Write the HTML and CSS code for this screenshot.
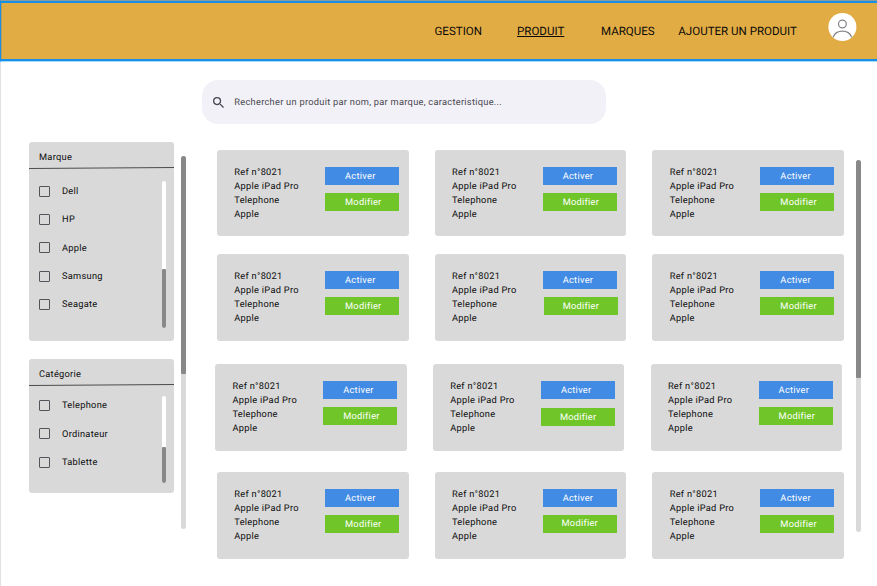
FILE: index.html
```html
<!DOCTYPE html>
<html lang="fr">
<head>
<meta charset="utf-8">
<title>Produits</title>
<link rel="stylesheet" href="styles.css">
</head>
<body>
<header class="header">
  <nav class="nav">
    <a>GESTION</a>
    <a class="current">PRODUIT</a>
    <a>MARQUES</a>
    <a>AJOUTER UN PRODUIT</a>
    <svg class="avatar" viewBox="0 0 29 28"><g transform="translate(.4 0)"><circle cx="14" cy="14" r="14" fill="#fff"/><g fill="none" stroke="#85868a" stroke-width="1.25"><circle cx="14" cy="11" r="3.9"/><path d="M4.7 24.2C6.2 20.4 9.8 18.2 14 18.2S21.8 20.4 23.3 24.2"/></g></g></svg>
  </nav>
</header>
<main class="page">
  <div class="search">
    <svg class="search-icon" viewBox="3 3 17.5 17.5"><path fill="#49454f" d="M15.5 14h-.79l-.28-.27A6.47 6.47 0 0 0 16 9.5 6.5 6.5 0 1 0 9.5 16c1.61 0 3.09-.59 4.23-1.57l.27.28v.79l5 4.99L20.49 19l-4.99-5zm-6 0C7.01 14 5 11.99 5 9.5S7.01 5 9.5 5 14 7.01 14 9.5 11.99 14 9.5 14z"/></svg>
    <span>Rechercher un produit par nom, par marque, caracteristique...</span>
  </div>
  <div class="content">
    <aside class="filters">
      <section class="panel brands">
        <h2>Marque</h2>
        <svg class="rule" viewBox="0 0 145 2"><path d="M0 1.5L145 .5" stroke="#3c3c3e" stroke-width=".9"/></svg>
        <div class="panel-body">
          <ul>
            <li><i class="box"></i><span>Dell</span></li>
            <li><i class="box"></i><span>HP</span></li>
            <li><i class="box"></i><span>Apple</span></li>
            <li><i class="box"></i><span>Samsung</span></li>
            <li><i class="box"></i><span>Seagate</span></li>
          </ul>
          <div class="mini-scroll"><div class="mini-thumb"></div></div>
        </div>
      </section>
      <section class="panel categories">
        <h2>Catégorie</h2>
        <svg class="rule" viewBox="0 0 145 2"><path d="M0 1.5L145 .5" stroke="#3c3c3e" stroke-width=".9"/></svg>
        <div class="panel-body">
          <ul>
            <li><i class="box"></i><span>Telephone</span></li>
            <li><i class="box"></i><span>Ordinateur</span></li>
            <li><i class="box"></i><span>Tablette</span></li>
          </ul>
          <div class="mini-scroll"><div class="mini-thumb"></div></div>
        </div>
      </section>
    </aside>
    <div class="scroll scroll-filters"><div class="thumb"></div></div>
    <div class="products">
      <div class="row">
        <article class="card"><p>Ref n°8021<br>Apple iPad Pro<br>Telephone<br>Apple</p><div class="actions"><button class="on">Activer</button><button class="edit">Modifier</button></div></article>
        <article class="card"><p>Ref n°8021<br>Apple iPad Pro<br>Telephone<br>Apple</p><div class="actions"><button class="on">Activer</button><button class="edit">Modifier</button></div></article>
        <article class="card"><p>Ref n°8021<br>Apple iPad Pro<br>Telephone<br>Apple</p><div class="actions"><button class="on">Activer</button><button class="edit">Modifier</button></div></article>
      </div>
      <div class="row second">
        <article class="card"><p>Ref n°8021<br>Apple iPad Pro<br>Telephone<br>Apple</p><div class="actions"><button class="on">Activer</button><button class="edit">Modifier</button></div></article>
        <article class="card"><p>Ref n°8021<br>Apple iPad Pro<br>Telephone<br>Apple</p><div class="actions"><button class="on">Activer</button><button class="edit shifted">Modifier</button></div></article>
        <article class="card"><p>Ref n°8021<br>Apple iPad Pro<br>Telephone<br>Apple</p><div class="actions"><button class="on">Activer</button><button class="edit">Modifier</button></div></article>
      </div>
      <div class="row third">
        <article class="card"><p>Ref n°8021<br>Apple iPad Pro<br>Telephone<br>Apple</p><div class="actions"><button class="on">Activer</button><button class="edit">Modifier</button></div></article>
        <article class="card"><p>Ref n°8021<br>Apple iPad Pro<br>Telephone<br>Apple</p><div class="actions"><button class="on">Activer</button><button class="edit lowered">Modifier</button></div></article>
        <article class="card"><p>Ref n°8021<br>Apple iPad Pro<br>Telephone<br>Apple</p><div class="actions"><button class="on">Activer</button><button class="edit">Modifier</button></div></article>
      </div>
      <div class="row fourth">
        <article class="card"><p>Ref n°8021<br>Apple iPad Pro<br>Telephone<br>Apple</p><div class="actions"><button class="on">Activer</button><button class="edit">Modifier</button></div></article>
        <article class="card"><p>Ref n°8021<br>Apple iPad Pro<br>Telephone<br>Apple</p><div class="actions"><button class="on">Activer</button><button class="edit raised">Modifier</button></div></article>
        <article class="card"><p>Ref n°8021<br>Apple iPad Pro<br>Telephone<br>Apple</p><div class="actions"><button class="on">Activer</button><button class="edit">Modifier</button></div></article>
      </div>
    </div>
    <div class="scroll scroll-products"><div class="thumb"></div></div>
  </div>
</main>
</body>
</html>
```
FILE: styles.css
```css
* { box-sizing: border-box; }
body {
  margin: 0;
  height: 586px;
  overflow: hidden;
  background: #fff;
  color: #0c0c0c;
  font: 9.27px/13.9px Roboto, sans-serif;
  letter-spacing: .27px;
  text-rendering: geometricPrecision;
}
.header {
  height: 62px;
  border: 2px solid #178fe6;
  border-top: 1px solid #8a9c9c;
  border-right: 0;
  border-bottom: 1px solid #a4dcfa;
  border-left-width: 1px;
  background: #e2ac45;
  box-shadow: inset 0 2px #178fe6, inset 0 -2px #178fe6, inset 1px 0 #b69c60;
}
.nav {
  display: grid;
  grid-template-columns: 82.5px 84px 77.3px 149.7px 29px;
  padding: 11.7px 0 0 433.5px;
  color: #0c0b08;
  font-size: 11.55px;
  line-height: 14px;
  letter-spacing: 0;
}
.nav a { padding-top: 11px; white-space: nowrap; }
.current { text-decoration: underline; text-decoration-thickness: 1px; }
.avatar { width: 29px; height: 28px; }
.page { height: 524px; border-left: 1px solid #e1e1e1; }
.search {
  display: flex;
  align-items: center;
  width: 403.5px;
  height: 44px;
  margin: 18.3px 0 0 201px;
  padding-left: 11px;
  border-radius: 16px;
  background: #f2f1f7;
  color: #49474f;
}
.search span { padding-top: 1.6px; }
.page::before { content: ""; display: table; }
.search-icon { width: 11px; height: 11px; margin-right: 10.3px; }
.content { display: flex; align-items: flex-start; padding: 17.7px 0 0 27.5px; }
.filters { width: 145px; }
.panel { border-radius: 3px; background: #d9d9d9; }
.brands { height: 199px; }
.categories { height: 133.5px; margin-top: 18.4px; }
h2 { margin: 0; padding: 8.8px 0 0 10.5px; height: 25px; font: inherit; }
.rule { display: block; width: 145px; height: 2px; }
.panel-body { display: flex; padding-left: 10.5px; }
ul { width: 123px; margin: 0; padding: 15.3px 0 0; list-style: none; }
li { display: flex; align-items: center; height: 14px; margin-bottom: 14.3px; }
li span { padding-top: 1.3px; }
.box { width: 11px; height: 11px; margin-right: 12px; border: 1px solid #55535a; border-radius: 1px; }
.mini-scroll { display: flex; align-items: flex-end; width: 4px; height: 147px; margin-top: 12px; border-radius: 2px; background: #fff; }
.mini-thumb { width: 4px; height: 59px; border-radius: 1px 1px 2px 2px; background: #888; }
.categories .mini-scroll { height: 86.5px; margin-top: 9.7px; }
.categories .mini-thumb { height: 36px; }
.categories ul { padding-top: 12.3px; }
.scroll { width: 5px; border-radius: 2.5px; background: #d9d9d9; }
.thumb { height: 218.5px; border-radius: 2.5px 2.5px 1px 1px; background: #888; }
.scroll-filters { height: 373px; margin: 14px 0 0 7.5px; }
.scroll-products { height: 372px; margin: 18px 0 0 12px; }
.products { width: 627px; margin: 8px 0 0 31px; }
.row { display: flex; gap: 26.1px; }
.second { margin-top: 17.8px; }
.third { margin: 23.5px 0 0 -1.8px; }
.fourth { margin-top: 21.3px; }
.card { display: flex; flex: none; width: 191.6px; height: 86.5px; padding: 17px 0 0 17.3px; border-radius: 3px; background: #d9d9d9; }
.card p { width: 90.7px; margin: -1.05px 0 0; }
.actions { display: flex; flex-direction: column; gap: 8px; width: 74px; }
button {
  width: 74px;
  height: 18px;
  padding: 1.2px 0 0 20px;
  border: 0;
  color: #fff;
  font: inherit;
  letter-spacing: inherit;
  text-align: left;
  text-rendering: inherit;
}
.on { background: #428be4; }
.edit { background: #70c628; }
.second button, .third button { padding-top: 1.6px; }
.shifted { margin-left: 1.3px; padding-left: 18.7px; }
.lowered { margin-top: .7px; padding-left: 19px; }
.raised { margin-top: -.4px; padding-left: 18.8px; }
```
